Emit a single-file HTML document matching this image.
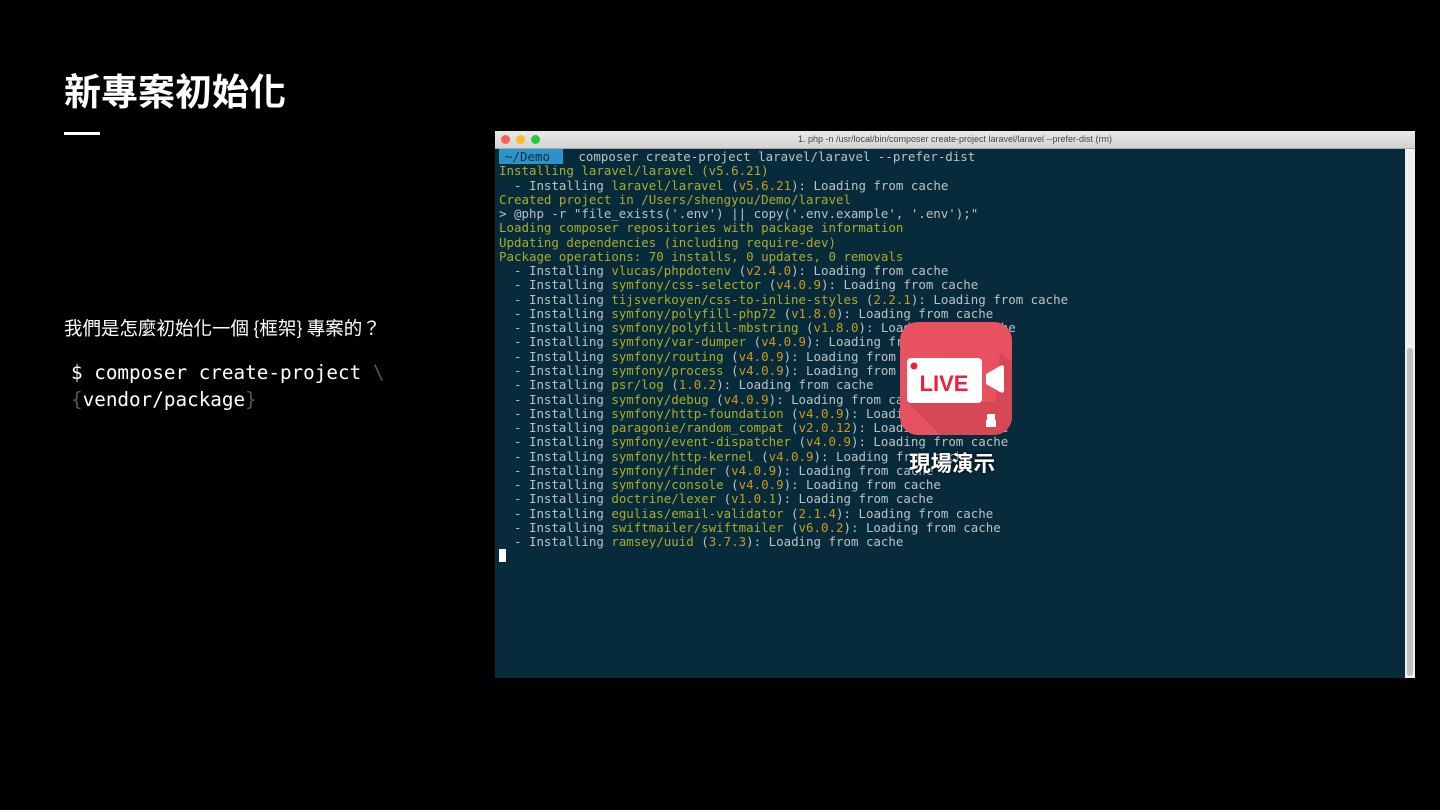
<!DOCTYPE html>
<html><head><meta charset="utf-8"><style>
*{margin:0;padding:0}
body{width:1440px;height:810px;background:#000;position:relative;overflow:hidden;font-family:"Liberation Sans","Noto Sans CJK TC",sans-serif;color:#fff}
.t{position:absolute;left:64px;top:62px;font-size:37px;font-weight:bold;font-family:"Noto Sans CJK TC",sans-serif;letter-spacing:0px}
.bar{position:absolute;left:64px;top:132px;width:36px;height:3px;background:#fff}
.q{position:absolute;left:64px;top:315px;font-size:18.5px;font-family:"Noto Sans CJK TC",sans-serif}
.c{position:absolute;left:71px;top:359px;font-family:"DejaVu Sans Mono",monospace;font-size:19.3px;line-height:27px;white-space:pre}
.c i{font-style:normal;color:#555}
.win{position:absolute;left:495px;top:131px;width:920px;height:547px;background:#072b3a;overflow:hidden}
.tb{height:17px;background:linear-gradient(#e9e9e9,#d3d3d3);border-bottom:1px solid #aaa;font-size:9px;color:#444;text-align:center;line-height:17px;position:relative}
.dot{position:absolute;top:4px;width:9px;height:9px;border-radius:50%}
.term{position:absolute;left:4px;top:19px;font-family:"DejaVu Sans Mono",monospace;font-size:12.45px;line-height:14.26px;white-space:pre;color:#bcc2c2}
.g{color:#a9ad2a}.o{color:#c99b1c}
.pr{background:#2a93c9;color:#0b2b3a;padding:0 6px}
.sb{position:absolute;right:0;top:18px;width:10px;bottom:0;background:#f0f0f0}
.th{position:absolute;left:2px;right:2px;top:199px;bottom:2px;background:#c0c0c0;border-radius:3px}
.cur{position:absolute;left:4px;top:418px;width:7px;height:13px;background:#fff}
.live{position:absolute;left:900px;top:322px;width:112px;height:113px;border-radius:18px;background:#e8515f;overflow:hidden}
.lt{position:absolute;left:909px;top:447px;font-size:21.5px;font-weight:bold;font-family:"Noto Sans CJK TC",sans-serif;color:#fff;text-shadow:0 0 3px #000}
</style></head><body>
<div class="t">新專案初始化</div>
<div class="bar"></div>
<div class="q">我們是怎麼初始化一個 {框架} 專案的？</div>
<div class="c">$ composer create-project <i>\</i>
<i>{</i>vendor/package<i>}</i></div>
<div class="win">
<div class="tb"><span class="dot" style="left:6px;background:#fc5f57"></span><span class="dot" style="left:21px;background:#fdbc2e"></span><span class="dot" style="left:36px;background:#28c840"></span>1. php -n /usr/local/bin/composer create-project laravel/laravel --prefer-dist (rm)</div>
<div class="term"><span class="pr">~/Demo </span>  composer create-project laravel/laravel --prefer-dist
<span class="g">Installing laravel/laravel (v5.6.21)</span>
  - Installing <span class="g">laravel/laravel</span> (<span class="o">v5.6.21</span>): Loading from cache
<span class="g">Created project in /Users/shengyou/Demo/laravel</span>
&gt; @php -r "file_exists('.env') || copy('.env.example', '.env');"
<span class="g">Loading composer repositories with package information</span>
<span class="g">Updating dependencies (including require-dev)</span>
<span class="g">Package operations: 70 installs, 0 updates, 0 removals</span>
  - Installing <span class="g">vlucas/phpdotenv</span> (<span class="o">v2.4.0</span>): Loading from cache
  - Installing <span class="g">symfony/css-selector</span> (<span class="o">v4.0.9</span>): Loading from cache
  - Installing <span class="g">tijsverkoyen/css-to-inline-styles</span> (<span class="o">2.2.1</span>): Loading from cache
  - Installing <span class="g">symfony/polyfill-php72</span> (<span class="o">v1.8.0</span>): Loading from cache
  - Installing <span class="g">symfony/polyfill-mbstring</span> (<span class="o">v1.8.0</span>): Loading from cache
  - Installing <span class="g">symfony/var-dumper</span> (<span class="o">v4.0.9</span>): Loading from cache
  - Installing <span class="g">symfony/routing</span> (<span class="o">v4.0.9</span>): Loading from cache
  - Installing <span class="g">symfony/process</span> (<span class="o">v4.0.9</span>): Loading from cache
  - Installing <span class="g">psr/log</span> (<span class="o">1.0.2</span>): Loading from cache
  - Installing <span class="g">symfony/debug</span> (<span class="o">v4.0.9</span>): Loading from cache
  - Installing <span class="g">symfony/http-foundation</span> (<span class="o">v4.0.9</span>): Loading from cache
  - Installing <span class="g">paragonie/random_compat</span> (<span class="o">v2.0.12</span>): Loading from cache
  - Installing <span class="g">symfony/event-dispatcher</span> (<span class="o">v4.0.9</span>): Loading from cache
  - Installing <span class="g">symfony/http-kernel</span> (<span class="o">v4.0.9</span>): Loading from cache
  - Installing <span class="g">symfony/finder</span> (<span class="o">v4.0.9</span>): Loading from cache
  - Installing <span class="g">symfony/console</span> (<span class="o">v4.0.9</span>): Loading from cache
  - Installing <span class="g">doctrine/lexer</span> (<span class="o">v1.0.1</span>): Loading from cache
  - Installing <span class="g">egulias/email-validator</span> (<span class="o">2.1.4</span>): Loading from cache
  - Installing <span class="g">swiftmailer/swiftmailer</span> (<span class="o">v6.0.2</span>): Loading from cache
  - Installing <span class="g">ramsey/uuid</span> (<span class="o">3.7.3</span>): Loading from cache</div>
<div class="cur"></div>
<div class="sb"><div class="th"></div></div>
</div>
<div class="live">
<svg width="112" height="113" viewBox="0 0 112 113">
<polygon points="8,80 40,113 112,113 112,40 100,30 95,80" fill="#c9434f" opacity="0.6"/>
<rect x="7" y="36" width="75" height="45" rx="4" fill="#fff"/>
<circle cx="14" cy="44" r="3.5" fill="#e8233e"/>
<text x="44" y="69" text-anchor="middle" font-family="Liberation Sans,sans-serif" font-weight="bold" font-size="22" fill="#e8233e">LIVE</text>
<path d="M86,52 L100,44 Q104,42 104,46 L104,68 Q104,72 100,70 L86,62 Z" fill="#fff"/>
<rect x="86" y="98" width="10" height="7" fill="#fff"/>
<rect x="87" y="92" width="8" height="6" fill="#fff"/>
</svg>
</div>
<div class="lt">現場演示</div>
</body></html>
